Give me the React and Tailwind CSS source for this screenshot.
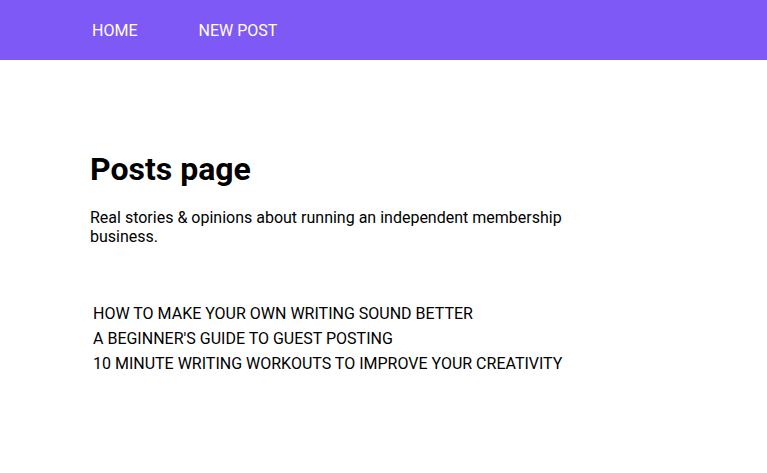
export default function App() {
  const posts = [
    "HOW TO MAKE YOUR OWN WRITING SOUND BETTER",
    "A BEGINNER'S GUIDE TO GUEST POSTING",
    "10 MINUTE WRITING WORKOUTS TO IMPROVE YOUR CREATIVITY",
  ];
  return (
    <div className="min-h-[473px] bg-white font-['Roboto',sans-serif] text-black">
      <nav className="h-[60px] bg-[#7f59f6] flex items-center pt-[2px] pl-[92px] gap-[61px] text-white text-[16px]">
        <a href="#">HOME</a>
        <a href="#">NEW POST</a>
      </nav>
      <main className="pl-[90px] pt-[90px]">
        <h1 className="text-[32px] font-bold leading-[38px]">Posts page</h1>
        <p className="mt-[20px] w-[490px] text-[16px] leading-[19px]">
          Real stories &amp; opinions about running an independent membership business.
        </p>
        <ul className="mt-[58px] pl-[3px] flex flex-col gap-[6px] text-[16px] leading-[19px]">
          {posts.map((p) => (
            <li key={p}>{p}</li>
          ))}
        </ul>
      </main>
    </div>
  );
}
